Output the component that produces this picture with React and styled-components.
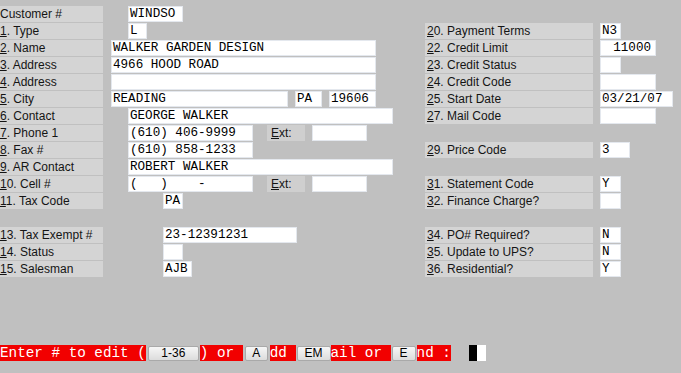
import React from "react";
import styled, { createGlobalStyle } from "styled-components";

const GlobalStyle = createGlobalStyle`
  html, body {
    margin: 0;
    padding: 0;
    background: #c0c0c0;
    overflow: hidden;
  }
`;

const Screen = styled.div`
  width: 681px;
  height: 373px;
  padding-top: 6px;
  box-sizing: border-box;
  display: flex;
  flex-direction: column;
`;

const Form = styled.div`
  display: flex;
  flex-direction: column;
`;

const Row = styled.div`
  display: grid;
  grid-template-columns: 103px 322px 168px 7px 1fr;
  height: 17px;
`;

const Label = styled.div`
  height: 16px;
  line-height: 16px;
  background: ${(p) => (p.$empty ? "transparent" : "#d4d4d4")};
  font-family: "Liberation Sans", Arial, sans-serif;
  font-size: 12px;
  color: #141414;
  padding-left: ${(p) => (p.$right ? "2px" : "0")};
  white-space: nowrap;
  overflow: hidden;

  u {
    text-underline-offset: 1px;
  }
`;

const Values = styled.div`
  display: flex;
  padding-left: ${(p) => p.$indent || 0}px;
  gap: 7px;
`;

const Field = styled.div`
  width: ${(p) => p.$w}px;
  height: 16px;
  line-height: 16px;
  background: #ffffff;
  box-shadow: inset 0 0 0 1px #e4e8ee;
  font-family: "Liberation Mono", "DejaVu Sans Mono", monospace;
  font-size: 12.6px;
  color: #000;
  padding: 0 ${(p) => (p.$right ? 5 : 2)}px 0 2px;
  box-sizing: border-box;
  text-align: ${(p) => (p.$right ? "right" : "left")};
  white-space: pre;
  overflow: hidden;
  margin-left: ${(p) => p.$ml || 0}px;
`;

const ExtLabel = styled.div`
  width: 38px;
  height: 16px;
  line-height: 16px;
  margin-left: 7px;
  background: #cfcfcf;
  font-family: "Liberation Sans", Arial, sans-serif;
  font-size: 12px;
  color: #141414;
  padding-left: 4px;
  box-sizing: border-box;
`;

const Prompt = styled.div`
  margin-top: 67px;
  height: 16px;
  display: flex;
  align-items: center;
`;

const RedText = styled.span`
  height: 16px;
  line-height: 16px;
  background: #f20000;
  color: #ffffff;
  font-family: "Liberation Mono", "DejaVu Sans Mono", monospace;
  font-size: 14.3px;
  white-space: pre;
  margin-left: ${(p) => p.$ml || 0}px;
`;

const KeyButton = styled.span`
  width: ${(p) => p.$w}px;
  height: 15px;
  box-sizing: border-box;
  margin-left: ${(p) => p.$ml || 0}px;
  background: linear-gradient(#f6f6f6, #dcdcdc);
  border: 1px solid #a9a9a9;
  border-radius: 2px;
  font-family: "Liberation Sans", Arial, sans-serif;
  font-size: 12px;
  line-height: 13px;
  color: #000;
  text-align: center;
`;

const Cursor = styled.span`
  display: flex;
  margin-left: 18px;
  height: 16px;

  &::before {
    content: "";
    width: 8px;
    background: #000;
  }
  &::after {
    content: "";
    width: 9px;
    background: #fff;
  }
`;

const Num = ({ text }) => (
  <>
    <u>{text[0]}</u>
    {text.slice(1)}
  </>
);

const rows = [
  { label: "Customer #", plain: true, indent: 25, fields: [{ w: 55, v: "WINDSO" }] },
  { label: "1. Type", indent: 25, fields: [{ w: 19, v: "L" }], right: "20. Payment Terms", rv: { w: 21, v: "N3" } },
  { label: "2. Name", indent: 8, fields: [{ w: 265, v: "WALKER GARDEN DESIGN" }], right: "22. Credit Limit", rv: { w: 56, v: "11000", right: true } },
  { label: "3. Address", indent: 8, fields: [{ w: 265, v: "4966 HOOD ROAD" }], right: "23. Credit Status", rv: { w: 21, v: "" } },
  { label: "4. Address", indent: 8, fields: [{ w: 265, v: "" }], right: "24. Credit Code", rv: { w: 56, v: "" } },
  { label: "5. City", indent: 8, fields: [{ w: 177, v: "READING" }, { w: 27, v: "PA" }, { w: 47, v: "19606" }], right: "25. Start Date", rv: { w: 73, v: "03/21/07" } },
  { label: "6. Contact", indent: 25, fields: [{ w: 265, v: "GEORGE WALKER" }], right: "27. Mail Code", rv: { w: 56, v: "" } },
  { label: "7. Phone 1", indent: 25, fields: [{ w: 125, v: "(610) 406-9999" }], ext: true },
  { label: "8. Fax #", indent: 25, fields: [{ w: 125, v: "(610) 858-1233" }], right: "29. Price Code", rv: { w: 30, v: "3" } },
  { label: "9. AR Contact", indent: 25, fields: [{ w: 265, v: "ROBERT WALKER" }] },
  { label: "10. Cell #", indent: 25, fields: [{ w: 125, v: "(   )    -" }], ext: true, right: "31. Statement Code", rv: { w: 21, v: "Y" } },
  { label: "11. Tax Code", indent: 60, fields: [{ w: 20, v: "PA" }], right: "32. Finance Charge?", rv: { w: 21, v: "" } },
  { empty: true },
  { label: "13. Tax Exempt #", indent: 60, fields: [{ w: 134, v: "23-12391231" }], right: "34. PO# Required?", rv: { w: 21, v: "N" } },
  { label: "14. Status", indent: 60, fields: [{ w: 20, v: "" }], right: "35. Update to UPS?", rv: { w: 21, v: "N" } },
  { label: "15. Salesman", indent: 60, fields: [{ w: 29, v: "AJB" }], right: "36. Residential?", rv: { w: 21, v: "Y" } },
];

export default function App() {
  return (
    <>
      <GlobalStyle />
      <Screen>
        <Form>
          {rows.map((r, i) =>
            r.empty ? (
              <Row key={i} />
            ) : (
              <Row key={i}>
                <Label>{r.plain ? r.label : <Num text={r.label} />}</Label>
                <Values $indent={r.indent}>
                  {r.fields.map((f, j) => (
                    <Field key={j} $w={f.w}>
                      {f.v}
                    </Field>
                  ))}
                  {r.ext && (
                    <>
                      <ExtLabel>
                        <u>E</u>xt:
                      </ExtLabel>
                      <Field $w={55}></Field>
                    </>
                  )}
                </Values>
                {r.right ? (
                  <>
                    <Label $right>
                      <Num text={r.right} />
                    </Label>
                    <span />
                    <Field $w={r.rv.w} $right={r.rv.right}>
                      {r.rv.v}
                    </Field>
                  </>
                ) : null}
              </Row>
            )
          )}
        </Form>
        <Prompt>
          <RedText>Enter # to edit (</RedText>
          <KeyButton $w={51} $ml={2}>1-36</KeyButton>
          <RedText $ml={1}>) or </RedText>
          <KeyButton $w={23} $ml={2}>A</KeyButton>
          <RedText $ml={2}>dd </RedText>
          <KeyButton $w={34} $ml={1}>EM</KeyButton>
          <RedText>ail or </RedText>
          <KeyButton $w={24} $ml={1}>E</KeyButton>
          <RedText $ml={1}>nd :</RedText>
          <Cursor />
        </Prompt>
      </Screen>
    </>
  );
}
